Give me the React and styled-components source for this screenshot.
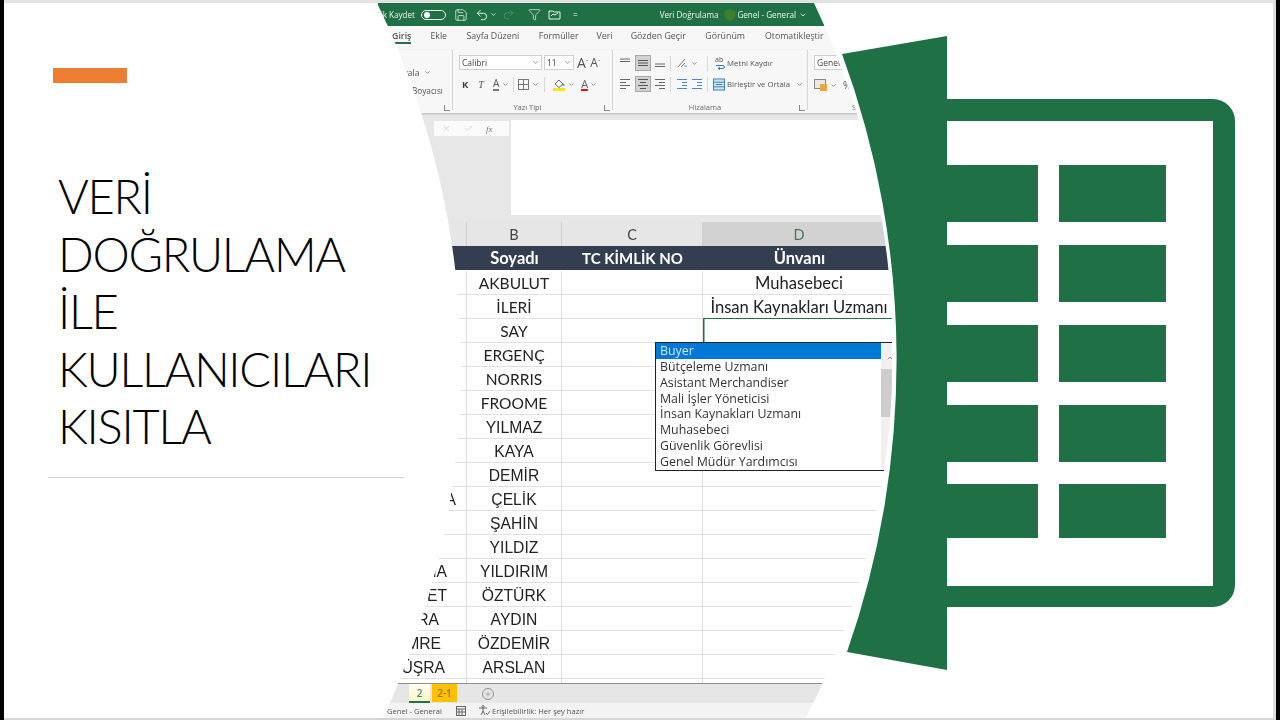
import React from "react";
import styled, { createGlobalStyle } from "styled-components";
import { ChevronDown, ChevronUp, Save, Undo2, Redo2, Funnel, Plus, X, Check } from "lucide-react";

const Global = createGlobalStyle`
  html, body { margin: 0; padding: 0; background: #000; }
  body { width: 1280px; height: 720px; overflow: hidden; font-family: "Open Sans", sans-serif; }
`;

const Frame = styled.div`
  width: 1280px; height: 720px; background: #000; padding: 0 4px; box-sizing: border-box;
`;
const Slide = styled.main`
  position: relative; width: 1272px; height: 720px; box-sizing: border-box; background: #fff; display: flex;
  border-top: 3px solid #e2e2e2; border-right: 3px solid #dcdcdc; border-bottom: 2px solid #d6d6d6;
`;
const Intro = styled.section`
  width: 374px; flex: none; display: flex; flex-direction: column; padding-top: 65px; box-sizing: border-box;
`;
const Accent = styled.div`width: 74px; height: 15px; background: #ed7d31; margin-left: 49px;`;
const Title = styled.h1`
  margin: 85px 0 0 54px; font: 300 47px/57.5px Lato, sans-serif; letter-spacing: -1.25px; color: #000; white-space: pre-line;
`;
const Rule = styled.hr`
  width: 356px; height: 1px; margin: 21px 0 0 44px; border: 0; background: #cfcfcf; flex: none;
`;

const Excel = styled.section`
  width: 514px; height: 715px; flex: none; position: relative; display: flex; flex-direction: column; overflow: hidden;
  background: #fff; filter: blur(0.35px);
  clip-path: path("M -1 0 A 830 830 0 0 1 5 715 L 428 715 A 815 815 0 0 0 436 0 Z");
`;
const TitleBar = styled.header`
  height: 23px; flex: none; background: #1f7145; color: #eef4f0; display: flex; align-items: center; font-size: 8.1px; white-space: nowrap;
`;
const AutoSave = styled.div`width: 37px; flex: none; display: flex; justify-content: flex-end;`;
const Toggle = styled.span`
  width: 25px; height: 10px; margin-left: 6px; border: 1px solid #f2f2f2; border-radius: 7px; box-sizing: border-box; display: flex; align-items: center; padding-left: 2px;
  &::before { content: ""; width: 6px; height: 6px; border-radius: 50%; background: #fff; }
`;
const Bar = styled.span`
  display: inline-flex; align-items: center; margin-left: ${p => p.$ml || 0}px; opacity: ${p => p.$dim ? 0.25 : 1}; flex: none;
`;

const Tabs = styled.nav`
  height: 24px; flex: none; display: flex; align-items: center; font-size: 8.8px; color: #555; background: #f7f7f7; padding: 0 0 4px 14px; box-sizing: border-box; white-space: nowrap;
`;
const Tab = styled.span`
  margin-right: ${p => p.$mr}px; position: relative; font-weight: ${p => p.$on ? 600 : 400}; flex: none;
  ${p => p.$on && `&::after { content: ""; position: absolute; left: 2px; right: 0; bottom: -2px; height: 2px; background: #217346; }`}
`;

const Ribbon = styled.div`
  height: 63px; flex: none; display: flex; background: #f7f7f7; color: #555; font-size: 7.9px; box-shadow: 0 1px 2px #bbb; position: relative; z-index: 1;
`;
const Group = styled.div`
  width: ${p => p.$w}px; flex: none; box-sizing: border-box; border-right: 1px solid #d4d4d4; position: relative; display: flex; flex-direction: column; height: 60px; padding-left: ${p => p.$pl || 0}px;
  &:last-child { border-right: 0; }
`;
const GroupLabel = styled.div`
  position: absolute; bottom: -3px; left: ${p => p.$l || 0}px; right: ${p => p.$r || 0}px; text-align: center; font-size: 7.5px; line-height: 11px; color: #666;
`;
const Launcher = styled.span`
  position: absolute; right: 2px; bottom: -1px; width: 5px; height: 5px; border-left: 1px solid #888; border-bottom: 1px solid #888;
`;
const RRow = styled.div`
  display: flex; align-items: center; height: ${p => p.$h || 16}px; margin-top: ${p => p.$mt || 0}px; white-space: nowrap;
`;
const Combo = styled.div`
  width: ${p => p.$w}px; height: 15px; box-sizing: border-box; flex: none; background: #fff; border: 1px solid #cfcfcf; margin-left: ${p => p.$ml || 0}px; display: flex; align-items: center; justify-content: space-between; padding: 0 2px 0 2px; font-size: 8.5px; color: #444;
`;
const Glyph = styled.span`
  margin-left: ${p => p.$ml || 0}px; flex: none; display: inline-flex; align-items: center; justify-content: center; color: ${p => p.$c || "#555"};
  font-size: ${p => p.$s || 10}px; font-weight: ${p => p.$b ? 700 : 400}; font-family: ${p => p.$serif ? '"Liberation Serif", serif' : 'inherit'}; font-style: ${p => p.$i ? 'italic' : 'normal'};
  border-bottom: ${p => p.$u ? `2px solid ${p.$u}` : 0}; line-height: 11px;
`;
const Sep = styled.span`width: 1px; height: 15px; flex: none; background: #d8d8d8; margin-left: ${p => p.$ml}px;`;
const Active = styled.span`
  width: 16px; height: 16px; flex: none; background: #d2d2d2; border: 1px solid #a8a8a8; box-sizing: border-box; margin-left: ${p => p.$ml || 0}px; display: inline-flex; align-items: center; justify-content: center;
`;

const Band = styled.div`height: 7px; flex: none; background: #e7e7e7;`;
const FormulaRow = styled.div`height: 95px; flex: none; display: flex; background: #e7e7e7;`;
const FxBox = styled.div`
  width: 75px; height: 15px; margin: 1px 2px 0 56px; background: #fbfbfb; flex: none; display: flex; align-items: center; gap: 13px; padding-left: 8px; box-sizing: border-box; color: #aaa;
  font: italic 9px "Liberation Serif", serif;
`;
const FxLabel = styled.span`color: #777;`;
const FormulaInput = styled.div`flex: 1; background: #fff;`;

const gridCols = "89px 95px 141px 193px";
const ColHead = styled.div`
  height: 24px; flex: none; display: grid; grid-template-columns: ${gridCols}; background: #e6e6e6; font: 14.5px/25px Lato, sans-serif; color: #444; width: 518px;
`;
const ColCell = styled.div`
  text-align: center; border-right: 1px solid #cfcfcf; box-sizing: border-box;
  ${p => p.$on && `background: #d2d2d2; color: #3d7a5a; border-bottom: 1px solid #217346;`}
`;
const HeadRow = styled.div`
  height: 24px; flex: none; display: grid; grid-template-columns: ${gridCols}; background: #333f50; color: #fff; font: 700 16.5px/25px Lato, sans-serif; margin-bottom: 1px; text-align: center; width: 518px;
`;
const HeadCell = styled.div`white-space: nowrap; font-size: ${p => p.$s ? `${p.$s}px` : "inherit"};`;
const Sheet = styled.div`flex: 1; min-height: 0; overflow: hidden; background: #fff; width: 518px;`;
const Row = styled.div`
  height: 24px; display: grid; grid-template-columns: ${gridCols}; box-sizing: border-box; border-bottom: 1px solid #e0e0e0; color: #222;
  font: ${p => p.$arial ? '15.7px/25px "Liberation Sans", sans-serif' : '15.5px/25px Lato, sans-serif'};
`;
const Cell = styled.div`
  border-right: 1px solid #dcdcdc; text-align: center; white-space: nowrap; box-sizing: border-box;
  ${p => p.$sel && `box-shadow: inset 1.5px 0 0 #217346, 0 -1px 0 #217346;`}
`;
const TitleCell = styled(Cell)`font-size: 16.6px;`;
const NameCell = styled(Cell)`text-align: right; padding-right: ${p => p.$end}px; overflow: hidden; direction: rtl;`;

const Dropdown = styled.div`
  position: absolute; left: 277px; top: 339px; width: 245px; height: 129px; box-sizing: border-box; background: #fff; border: 1px solid #222; z-index: 2; display: flex;
`;
const List = styled.ul`
  list-style: none; margin: 0; padding: 0; width: 225px; flex: none;
`;
const Option = styled.li`
  height: 15.85px; line-height: 16.4px; padding-left: 4px; font-size: 12.35px; color: ${p => p.$on ? "#cfe6fb" : "#333"}; background: ${p => p.$on ? "#0078d7" : "transparent"}; white-space: nowrap;
`;
const Scroll = styled.div`flex: 1; background: #f0f0f0; display: flex; flex-direction: column; align-items: center; color: #555;`;
const ScrollArrow = styled.div`height: 26px; flex: none; display: flex; align-items: center; padding-top: 4px; box-sizing: border-box;`;
const Thumb = styled.div`height: 48px; width: 100%; flex: none; background: #cdcdcd;`;

const SheetTabs = styled.div`
  height: 20px; flex: none; display: flex; align-items: center; background: #e6e6e6; border-top: 1px solid #8f8f8f; box-sizing: border-box; padding-left: 31px;
  font: 10px "Open Sans", sans-serif;
`;
const SheetTab = styled.span`
  height: 18px; margin-right: 2px; margin-top: -1px; display: flex; align-items: center; justify-content: center; box-sizing: border-box; font-weight: 600; width: ${p => p.$w}px; flex: none;
  background: ${p => p.$gold ? "#ffc000" : "linear-gradient(#fffdf2,#fff6c9)"}; color: ${p => p.$gold ? "#a4702a" : "#3f8a5b"}; ${p => !p.$gold && "border-bottom: 2px solid #217346; height: 19px; margin-top: 0;"}
`;
const AddCircle = styled.span`
  width: 12px; height: 12px; margin-left: 23px; border: 1px solid #8e8e8e; border-radius: 50%; box-sizing: border-box; display: inline-flex; align-items: center; justify-content: center; color: #777;
`;
const Status = styled.footer`
  height: 15px; flex: none; background: #f3f3f3; color: #555; font-size: 7.6px; display: flex; align-items: center; padding-left: 9px; white-space: nowrap;
`;
const Logo = styled.svg`position: absolute; left: 834px; top: 27px; width: 400px; height: 645px;`;

const Lines = ({ w = [10, 10, 10], x = 0, y0 = 2, dy = 3.5, s = 12, c = "#666" }) => (
  <svg width={s} height={s} viewBox="0 0 12 12">
    {w.map((l, i) => {
      const start = x === "c" ? (12 - l) / 2 : x === "r" ? 11 - l : 1;
      return <line key={i} x1={start} x2={start + l} y1={y0 + i * dy} y2={y0 + i * dy} stroke={c} strokeWidth="1" />;
    })}
  </svg>
);
const Down = ({ ml = 2 }) => (
  <Bar $ml={ml}><ChevronDown size={7} strokeWidth={2.4} color="#666" /></Bar>
);

const BorderIcon = () => (
  <svg width="13" height="13" viewBox="0 0 13 13" fill="none" stroke="#777"><rect x="1.5" y="1.5" width="10" height="10" /><path d="M6.5 1.5v10M1.5 6.5h10" /></svg>
);
const FillIcon = () => (
  <svg width="14" height="14" viewBox="0 0 14 14"><path d="M3 7l4-4 4 4-4 3.5z" fill="#fff" stroke="#666" /><circle cx="11.5" cy="8" r="1.2" fill="#6aa7c9" /><rect x="1" y="11" width="12" height="3" fill="#f4e61a" /></svg>
);
const MergeIcon = () => (
  <svg width="12" height="13" viewBox="0 0 13 13" fill="#cfe4f6" stroke="#3a79b7"><rect x="0.5" y="0.5" width="12" height="12" /><path d="M0.5 4h12M0.5 9h12M3 6.5h7" /></svg>
);
const WrapIcon = () => (
  <svg width="13" height="14" viewBox="0 0 13 14" fill="none"><text x="1" y="6" fontSize="7" fill="#555" fontFamily="Open Sans">ab</text><path d="M2 9.5h7c2 0 2 3 0 3H5" stroke="#2e7cc0" /><path d="M6 11l-2 1.5L6 14" stroke="#2e7cc0" /></svg>
);
const NumIcon = () => (
  <svg width="14" height="13" viewBox="0 0 14 13"><rect x="0.5" y="0.5" width="11" height="9" fill="#e8e8e8" stroke="#888" /><rect x="6" y="5" width="7" height="7" fill="#f0a33e" /></svg>
);
const FolderIcon = () => (
  <svg width="13" height="11" viewBox="0 0 13 11" fill="none" stroke="#eaf2ed"><path d="M1 2h4l1 1h6v7H1z" /><path d="M3 7l2-2 2 1 3-2" /></svg>
);
const Shield = () => (
  <svg width="12" height="12" viewBox="0 0 12 12"><path d="M6 0l5.5 2v4c0 3-3 5-5.5 6C3.500 11 .5 9 .5 6V2z" fill="#3f7f2a" /></svg>
);
const CalcIcon = () => (
  <svg width="10" height="10" viewBox="0 0 10 10" fill="none" stroke="#666"><rect x=".5" y=".5" width="9" height="9" /><path d="M.5 3h9M3 3v6M6 3v6M.5 6h9" /></svg>
);
const A11yIcon = () => (
  <svg width="12" height="11" viewBox="0 0 12 11" fill="none" stroke="#666"><circle cx="5" cy="1.5" r="1" /><path d="M1 3h8M5 3v3L3 10M5 6l2 4" /><path d="M8 8l1.500 1.500L12 6" /></svg>
);
const OrientIcon = () => (
  <svg width="13" height="12" viewBox="0 0 13 12" fill="none" stroke="#777"><path d="M2 10L9 2M5 10l4-4" /><path d="M8 9h3" stroke="#6aa7c9" /></svg>
);

const rows = [
  ["", "AKBULUT", "Muhasebeci"],
  ["", "İLERİ", "İnsan Kaynakları Uzmanı"],
  ["", "SAY", ""],
  ["", "ERGENÇ", ""],
  ["", "NORRIS", ""],
  ["", "FROOME", ""],
  ["", "YILMAZ", ""],
  ["", "KAYA", ""],
  ["", "DEMİR", ""],
  ["FATMA", "ÇELİK", "", 10],
  ["", "ŞAHİN", ""],
  ["", "YILDIZ", ""],
  ["FATMA", "YILDIRIM", "", 19],
  ["MEHMET", "ÖZTÜRK", "", 19],
  ["ZEHRA", "AYDIN", "", 27],
  ["YUNUS EMRE", "ÖZDEMİR", "", 25],
  ["BÜŞRA", "ARSLAN", "", 21],
  ["", "KORKMAZ", ""],
];
const options = ["Buyer", "Bütçeleme Uzmanı", "Asistant Merchandiser", "Mali İşler Yöneticisi", "İnsan Kaynakları Uzmanı", "Muhasebeci", "Güvenlik Görevlisi", "Genel Müdür Yardımcısı"];
const tabs = [["Giriş", 19], ["Ekle", 19.5], ["Sayfa Düzeni", 19.4], ["Formüller", 18], ["Veri", 18], ["Gözden Geçir", 19.5], ["Görünüm", 20], ["Otomatikleştir", 0]];
const cellRows = [165, 245, 325, 405];

export default function App() {
  return (
    <Frame>
      <Global />
      <Slide>
        <Intro>
          <Accent />
          <Title>{"VERİ\nDOĞRULAMA\nİLE\nKULLANICILARI\nKISITLA"}</Title>
          <Rule />
        </Intro>
        <Excel>
          <TitleBar>
            <AutoSave>Otomatik Kaydet</AutoSave>
            <Toggle />
            <Bar $ml={8}><Save size={14} strokeWidth={1.3} /></Bar>
            <Bar $ml={7}><Undo2 size={14} strokeWidth={1.6} /></Bar>
            <Bar $ml={1}><ChevronDown size={7} strokeWidth={2.5} /></Bar>
            <Bar $ml={5} $dim><Redo2 size={13} strokeWidth={1.6} /></Bar>
            <Bar $ml={13}><Funnel size={13} strokeWidth={1.3} /></Bar>
            <Bar $ml={7}><FolderIcon /></Bar>
            <Bar $ml={12}>=</Bar>
            <Bar $ml={82}>Veri Doğrulama</Bar>
            <Bar $ml={6}><Shield /></Bar>
            <Bar $ml={1}>Genel - General</Bar>
            <Bar $ml={3}><ChevronDown size={8} strokeWidth={2.5} /></Bar>
          </TitleBar>
          <Tabs>
            {tabs.map(([t, m], i) => <Tab key={t} $mr={m} $on={i === 0}>{t}</Tab>)}
          </Tabs>
          <Ribbon>
            <Group $w={75}>
              <RRow $mt={16} $h={12}><Glyph $ml={10} $s={8.5}>Kopyala</Glyph><Down ml={5} /></RRow>
              <RRow $mt={6} $h={12}><Glyph $ml={11} $s={8.2}>Biçim Boyacısı</Glyph></RRow>
              <Launcher />
            </Group>
            <Group $w={160} $pl={6}>
              <RRow $mt={5} $h={15}>
                <Combo $w={83}>Calibri<ChevronDown size={7} strokeWidth={2.4} color="#666" /></Combo>
                <Combo $w={30} $ml={2}>11<ChevronDown size={7} strokeWidth={2.4} color="#666" /></Combo>
                <Glyph $ml={3} $s={14}>A</Glyph><Glyph $s={6}>ˆ</Glyph>
                <Glyph $ml={2} $s={12}>A</Glyph><Glyph $s={6}>ˇ</Glyph>
              </RRow>
              <RRow $mt={5} $h={18}>
                <Glyph $ml={3} $b $s={9.5} $c="#444">K</Glyph>
                <Glyph $ml={10} $i $serif $s={10}>T</Glyph>
                <Glyph $ml={9} $s={10} $u="#777">A</Glyph><Down ml={3} />
                <Sep $ml={4} /><Bar $ml={3}><BorderIcon /></Bar><Down ml={2} />
                <Sep $ml={5} /><Bar $ml={7}><FillIcon /></Bar><Down ml={2} />
                <Bar $ml={6}><Glyph $s={11} $u="#d21f1f" $c="#666">A</Glyph></Bar><Down ml={2} />
              </RRow>
              <GroupLabel $r={10}>Yazı Tipi</GroupLabel>
              <Launcher />
            </Group>
            <Group $w={195} $pl={6}>
              <RRow $mt={5} $h={16}>
                <Bar><Lines y0={2} dy={2.5} w={[10, 10]} /></Bar>
                <Active $ml={4}><Lines y0={3.5} dy={2.5} w={[10, 10, 10]} x="c" c="#555" /></Active>
                <Bar $ml={3}><Lines y0={7} dy={2.5} w={[10, 10]} /></Bar>
                <Sep $ml={4} />
                <Bar $ml={5}><OrientIcon /></Bar>
                <Down ml={2} />
                <Sep $ml={9} />
                <Bar $ml={6}><WrapIcon /></Bar>
                <Glyph $s={7.8}>Metni Kaydır</Glyph>
              </RRow>
              <RRow $mt={5} $h={16}>
                <Bar><Lines w={[10, 6, 10, 6]} y0={1.5} dy={3} /></Bar>
                <Active $ml={4}><Lines w={[10, 6, 10, 6]} y0={1.5} dy={3} x="c" c="#555" /></Active>
                <Bar $ml={3}><Lines w={[10, 6, 10, 6]} y0={1.5} dy={3} x="r" /></Bar>
                <Sep $ml={4} />
                <Bar $ml={5}><Lines w={[10, 5, 5, 10]} y0={1.5} dy={3} x="r" c="#4f87b8" /></Bar>
                <Bar $ml={3}><Lines w={[10, 5, 5, 10]} y0={1.5} dy={3} x="r" c="#4f87b8" /></Bar>
                <Sep $ml={4} />
                <Bar $ml={5}><MergeIcon /></Bar>
                <Glyph $ml={2} $s={7.8}>Birleştir ve Ortala</Glyph>
                <Down ml={6} />
              </RRow>
              <GroupLabel $r={10}>Hizalama</GroupLabel>
              <Launcher />
            </Group>
            <Group $w={84} $pl={6}>
              <RRow $mt={5} $h={15}><Combo $w={70}>Genel</Combo></RRow>
              <RRow $mt={7} $h={16}><Bar><NumIcon /></Bar><Down ml={2} /><Glyph $ml={6}>%</Glyph></RRow>
              <GroupLabel $l={18}>Sayı</GroupLabel>
            </Group>
          </Ribbon>
          <Band />
          <FormulaRow>
            <FxBox><X size={9} strokeWidth={1.2} /><Check size={9} strokeWidth={1.2} /><FxLabel>fx</FxLabel></FxBox>
            <FormulaInput />
          </FormulaRow>
          <Band />
          <ColHead>
            <ColCell>A</ColCell>
            <ColCell>B</ColCell>
            <ColCell>C</ColCell>
            <ColCell $on>D</ColCell>
          </ColHead>
          <HeadRow>
            <HeadCell>Adı</HeadCell>
            <HeadCell>Soyadı</HeadCell>
            <HeadCell $s={15}>TC KİMLİK NO</HeadCell>
            <HeadCell>Ünvanı</HeadCell>
          </HeadRow>
          <Sheet>
            {rows.map(([a, b, d, end], i) => (
              <Row key={b} $arial={i > 5}>
                <NameCell $end={end || 0}>{a}</NameCell>
                <Cell>{b}</Cell>
                <Cell />
                <TitleCell $sel={i === 2}>{d}</TitleCell>
              </Row>
            ))}
          </Sheet>
          <SheetTabs>
            <SheetTab $w={21}>2</SheetTab>
            <SheetTab $w={25} $gold>2-1</SheetTab>
            <AddCircle><Plus size={8} strokeWidth={1.4} /></AddCircle>
          </SheetTabs>
          <Status>
            Genel - General
            <Bar $ml={14}><CalcIcon /></Bar>
            <Bar $ml={12}><A11yIcon /></Bar>
            <Bar $ml={2}>Erişilebilirlik: Her şey hazır</Bar>
          </Status>
          <Dropdown>
            <List>{options.map((o, i) => <Option key={o} $on={i === 0}>{o}</Option>)}</List>
            <Scroll><ScrollArrow><ChevronUp size={8} strokeWidth={2} /></ScrollArrow><Thumb /></Scroll>
          </Dropdown>
        </Excel>
        <Logo viewBox="838 30 400 645" fill="#1f7145">
          <path d="M842 54 A885 885 0 0 1 847 652 L947 670 L947 36 Z" />
          <path fillRule="evenodd" d="M947 99 H1213 A22 22 0 0 1 1235 121 V585 A22 22 0 0 1 1213 607 H947 V586 H1213 V121 H947 Z" />
          {cellRows.map(y => (
            <React.Fragment key={y}>
              <rect x="947" y={y} width="91" height="57" />
              <rect x="1059" y={y} width="107" height="57" />
            </React.Fragment>
          ))}
          <rect x="947" y="484" width="91" height="54" />
          <rect x="1059" y="484" width="107" height="54" />
        </Logo>
      </Slide>
    </Frame>
  );
}
